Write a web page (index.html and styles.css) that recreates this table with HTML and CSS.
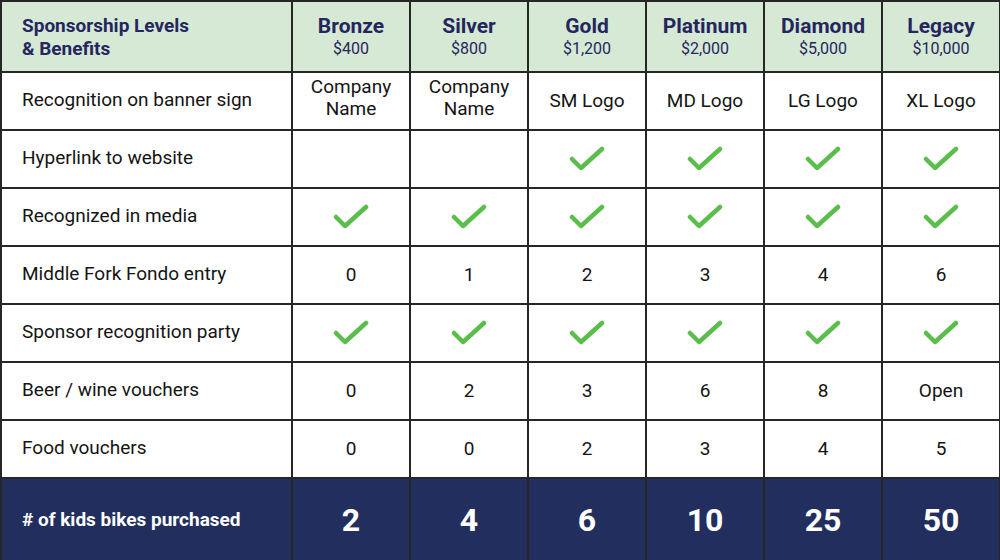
FILE: index.html
```html
<!DOCTYPE html>
<html>
<head>
<meta charset="utf-8">
<link rel="stylesheet" href="styles.css">
</head>
<body>
<table class="grid">
  <colgroup>
    <col class="c-label"><col class="c-tier"><col class="c-tier"><col class="c-tier"><col class="c-tier"><col class="c-tier"><col class="c-tier">
  </colgroup>
  <thead>
    <tr class="head">
      <th class="label">Sponsorship Levels<br>&amp; Benefits</th>
      <th><span class="tier">Bronze</span><span class="price">$400</span></th>
      <th><span class="tier">Silver</span><span class="price">$800</span></th>
      <th><span class="tier">Gold</span><span class="price">$1,200</span></th>
      <th><span class="tier">Platinum</span><span class="price">$2,000</span></th>
      <th><span class="tier">Diamond</span><span class="price">$5,000</span></th>
      <th><span class="tier">Legacy</span><span class="price">$10,000</span></th>
    </tr>
  </thead>
  <tbody>
    <tr>
      <td class="label">Recognition on banner sign</td>
      <td class="two">Company<br>Name</td><td class="two">Company<br>Name</td><td>SM Logo</td><td>MD Logo</td><td>LG Logo</td><td>XL Logo</td>
    </tr>
    <tr>
      <td class="label">Hyperlink to website</td>
      <td></td><td></td>
      <td><svg class="chk" viewBox="0 0 36 26"><path d="M3 13 L12 22 L33 3"/></svg></td>
      <td><svg class="chk" viewBox="0 0 36 26"><path d="M3 13 L12 22 L33 3"/></svg></td>
      <td><svg class="chk" viewBox="0 0 36 26"><path d="M3 13 L12 22 L33 3"/></svg></td>
      <td><svg class="chk" viewBox="0 0 36 26"><path d="M3 13 L12 22 L33 3"/></svg></td>
    </tr>
    <tr>
      <td class="label">Recognized in media</td>
      <td><svg class="chk" viewBox="0 0 36 26"><path d="M3 13 L12 22 L33 3"/></svg></td>
      <td><svg class="chk" viewBox="0 0 36 26"><path d="M3 13 L12 22 L33 3"/></svg></td>
      <td><svg class="chk" viewBox="0 0 36 26"><path d="M3 13 L12 22 L33 3"/></svg></td>
      <td><svg class="chk" viewBox="0 0 36 26"><path d="M3 13 L12 22 L33 3"/></svg></td>
      <td><svg class="chk" viewBox="0 0 36 26"><path d="M3 13 L12 22 L33 3"/></svg></td>
      <td><svg class="chk" viewBox="0 0 36 26"><path d="M3 13 L12 22 L33 3"/></svg></td>
    </tr>
    <tr>
      <td class="label">Middle Fork Fondo entry</td>
      <td>0</td><td>1</td><td>2</td><td>3</td><td>4</td><td>6</td>
    </tr>
    <tr>
      <td class="label">Sponsor recognition party</td>
      <td><svg class="chk" viewBox="0 0 36 26"><path d="M3 13 L12 22 L33 3"/></svg></td>
      <td><svg class="chk" viewBox="0 0 36 26"><path d="M3 13 L12 22 L33 3"/></svg></td>
      <td><svg class="chk" viewBox="0 0 36 26"><path d="M3 13 L12 22 L33 3"/></svg></td>
      <td><svg class="chk" viewBox="0 0 36 26"><path d="M3 13 L12 22 L33 3"/></svg></td>
      <td><svg class="chk" viewBox="0 0 36 26"><path d="M3 13 L12 22 L33 3"/></svg></td>
      <td><svg class="chk" viewBox="0 0 36 26"><path d="M3 13 L12 22 L33 3"/></svg></td>
    </tr>
    <tr>
      <td class="label">Beer / wine vouchers</td>
      <td>0</td><td>2</td><td>3</td><td>6</td><td>8</td><td>Open</td>
    </tr>
    <tr>
      <td class="label">Food vouchers</td>
      <td>0</td><td>0</td><td>2</td><td>3</td><td>4</td><td>5</td>
    </tr>
  </tbody>
  <tfoot>
    <tr class="foot">
      <td class="label">#&nbsp;of kids bikes purchased</td>
      <td>2</td><td>4</td><td>6</td><td>10</td><td>25</td><td>50</td>
    </tr>
  </tfoot>
</table>
</body>
</html>
```
FILE: styles.css
```css
html, body {
  margin: 0;
  padding: 0;
  background: #ffffff;
}
body {
  font-family: Roboto, "Liberation Sans", sans-serif;
  color: #141414;
}
.grid {
  width: 1000px;
  border-collapse: collapse;
  table-layout: fixed;
}
.c-label { width: 291px; }
.c-tier { width: 118px; }
.grid th, .grid td {
  border: 2px solid #262626;
  padding: 0;
  text-align: center;
  vertical-align: middle;
}
.head th {
  height: 69px;
  background: #d6e9d5;
  color: #25265e;
}
.head th.label {
  text-align: left;
  padding-left: 20px;
  font-size: 19px;
  font-weight: 700;
  line-height: 23px;
}
.tier {
  display: block;
  font-size: 21px;
  font-weight: 700;
  line-height: 24px;
}
.price {
  display: block;
  font-size: 16px;
  font-weight: 400;
  line-height: 22px;
}
tbody tr {
  height: 58px;
}
tbody td {
  font-size: 19px;
  line-height: 22px;
  padding-bottom: 3px;
}
tbody td.label {
  text-align: left;
  padding-left: 20px;
  padding-bottom: 2px;
}
tbody td.two {
  padding-bottom: 6px;
}
.chk {
  display: block;
  margin: 0 auto;
  width: 36px;
  height: 26px;
  fill: none;
  stroke: #5bbd4b;
  stroke-width: 4.5;
  stroke-linecap: round;
  stroke-linejoin: round;
}
.foot {
  height: 83px;
}
.foot td {
  background: #222e5e;
  color: #ffffff;
  font-size: 32px;
  font-weight: 700;
}
.foot td.label {
  text-align: left;
  padding-left: 20px;
  font-size: 19px;
}
```
